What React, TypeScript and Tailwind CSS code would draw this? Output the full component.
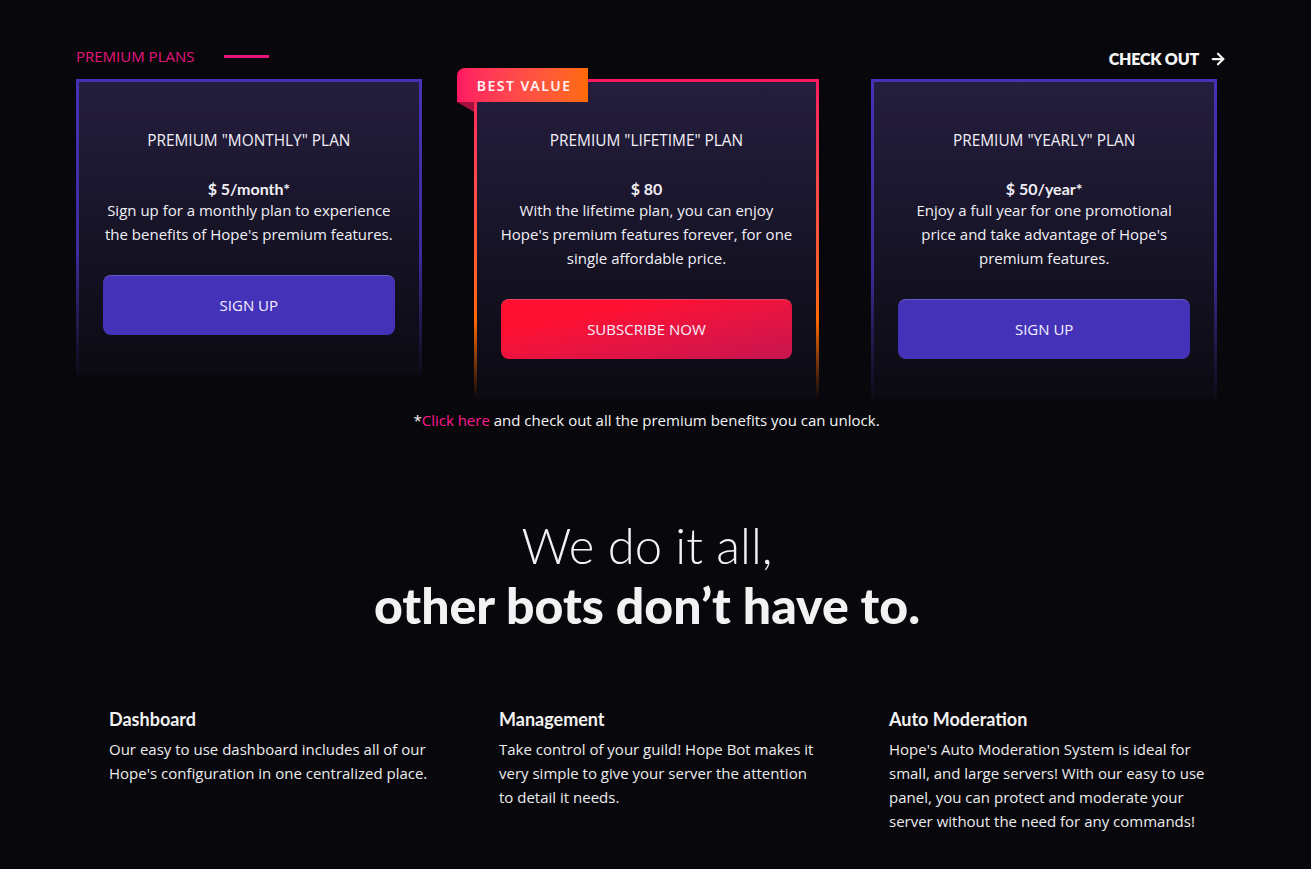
import { ArrowRight } from "lucide-react";

interface Plan {
  title: string;
  price: string;
  text: string;
  cta: string;
  featured?: boolean;
}

const plans: Plan[] = [
  {
    title: 'PREMIUM "MONTHLY" PLAN',
    price: "$ 5/month*",
    text: "Sign up for a monthly plan to experience the benefits of Hope's premium features.",
    cta: "SIGN UP",
  },
  {
    title: 'PREMIUM "LIFETIME" PLAN',
    price: "$ 80",
    text: "With the lifetime plan, you can enjoy Hope's premium features forever, for one single affordable price.",
    cta: "SUBSCRIBE NOW",
    featured: true,
  },
  {
    title: 'PREMIUM "YEARLY" PLAN',
    price: "$ 50/year*",
    text: "Enjoy a full year for one promotional price and take advantage of Hope's premium features.",
    cta: "SIGN UP",
  },
];

const features = [
  {
    title: "Dashboard",
    text: "Our easy to use dashboard includes all of our Hope's configuration in one centralized place.",
  },
  {
    title: "Management",
    text: "Take control of your guild! Hope Bot makes it very simple to give your server the attention to detail it needs.",
  },
  {
    title: "Auto Moderation",
    text: "Hope's Auto Moderation System is ideal for small, and large servers! With our easy to use panel, you can protect and moderate your server without the need for any commands!",
  },
];

const body = "font-['Open_Sans',sans-serif]";
const heading = "font-['Lato',sans-serif]";

const PlanCard = ({ plan }: { plan: Plan }) => (
  <div className="relative">
    {plan.featured && (
      <>
        <div className="absolute left-[-17px] top-[-11px] z-10 flex h-[34px] w-[131px] items-center rounded-tl-[8px] bg-gradient-to-r from-[#ff1662] to-[#ff6b00] pl-[20px] text-[14px] font-semibold tracking-[1.5px] text-[#fff1f4]">
          BEST VALUE
        </div>
        <div className="absolute left-[-17px] top-[23px] h-0 w-0 border-t-[10px] border-l-[17px] border-t-[#a3103d] border-l-transparent"></div>
      </>
    )}
    <div
      className={`px-[3px] pt-[3px] ${
        plan.featured
          ? "bg-gradient-to-b from-[#ff1761] via-[#ff6a00] via-75% to-transparent"
          : "bg-gradient-to-b from-[#4433b3] via-[#3a2c9c] via-60% to-[#0c0b18]"
      }`}
    >
      <div className="flex flex-col items-center bg-gradient-to-b from-[#251e3f] to-[#0b0a12] px-[24px] pb-[40px] pt-[48px] text-center text-[#f2f0f7]">
        <h3 className={`${body} text-[15.4px] leading-[22px]`}>{plan.title}</h3>
        <p className={`${heading} mt-[27px] text-[16px] font-bold leading-[19px]`}>
          {plan.price}
        </p>
        <p className={`${body} -mx-[1px] text-[15px] leading-[24px]`}>{plan.text}</p>
        <button
          className={`${body} mt-[29px] flex h-[60px] w-full items-center justify-center rounded-[8px] border-t border-white/20 text-[15px] text-[#f3f1ff] ${
            plan.featured
              ? "bg-gradient-to-br from-[#ff1030] from-25% to-[#c7144f]"
              : "bg-[#4433b9]"
          }`}
        >
          {plan.cta}
        </button>
      </div>
    </div>
  </div>
);

export default function App() {
  return (
    <div className="min-h-[869px] bg-[#08070c] pb-[30px] pt-[46px] text-white">
      <div className="ml-[76px] w-[1141px]">
        <div className="-mr-[10px] flex h-[20px] items-start justify-between">
          <div className="flex items-center gap-[30px]">
            <span className={`${body} text-[15px] leading-[20px] text-[#e6157d]`}>
              PREMIUM PLANS
            </span>
            <span className="h-[3px] w-[45px] bg-[#e6157d]"></span>
          </div>
          <div className={`${heading} mt-[3px] flex h-[20px] items-center gap-[10px] text-[16px] font-extrabold tracking-[-0.2px] text-[#f5f5f5]`}>
            CHECK OUT
            <ArrowRight size={18} strokeWidth={3} />
          </div>
        </div>

        <div className="mt-[13px] grid grid-cols-3 items-start gap-[52px]">
          {plans.map((plan) => (
            <PlanCard key={plan.title} plan={plan} />
          ))}
        </div>

        <p className={`${body} mt-[9px] text-center text-[15px] leading-[24px] text-[#f6f6f6]`}>
          *<span className="text-[#ff1a8c]">Click here</span> and check out all the premium benefits you can unlock.
        </p>
      </div>

      <div className={`${heading} mt-[83px] w-[1294px] text-center leading-[60px] text-[#f2f2f2]`}>
        <h2 className="text-[49px] font-light">We do it all,</h2>
        <h2 className="text-[50px] font-black">other bots don’t have to.</h2>
      </div>

      <div className="ml-[109px] mt-[70px] grid w-[1170px] grid-cols-3">
        {features.map((f) => (
          <div key={f.title} className="w-[324px]">
            <h4 className={`${heading} text-[18px] font-bold leading-[28px] text-[#f2f2f2]`}>
              {f.title}
            </h4>
            <p className={`${body} mt-[4px] text-[15px] leading-[24px] text-[#ededed]`}>
              {f.text}
            </p>
          </div>
        ))}
      </div>
    </div>
  );
}
